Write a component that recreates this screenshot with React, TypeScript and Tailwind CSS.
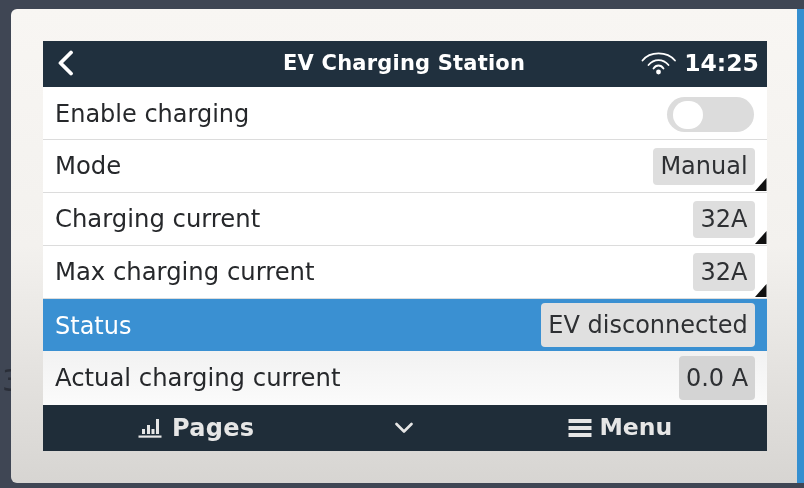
const font = { fontFamily: '"DejaVu Sans", sans-serif' };

function Corner() {
  return (
    <svg className="absolute right-0 bottom-[1px]" width="13" height="14" viewBox="0 0 13 14">
      <path d="M1 14 L12.5 14 L12.5 1 Z" fill="#111" />
    </svg>
  );
}

function Row({
  label,
  value,
  btn,
  corner,
}: {
  label: string;
  value: string;
  btn: string;
  corner?: boolean;
}) {
  return (
    <div className="relative flex h-[53px] shrink-0 items-center justify-between bg-white border-b border-[#dcdcdc] pl-3 pr-3">
      <span className="mt-[1px] text-[24.3px] text-[#26282b] leading-none">{label}</span>
      <span className={`flex items-center justify-center rounded-[4px] bg-[#dedede] text-[24px] text-[#2e3033] leading-none ${btn}`}>
        {value}
      </span>
      {corner && <Corner />}
    </div>
  );
}

export default function App() {
  return (
    <div className="relative flex h-[488px] w-[804px] overflow-hidden bg-[#3f4654] pt-[9px] pb-[5px] pl-[11px] blur-[0.4px]" style={font}>
      <span className="absolute left-[2px] top-[366px] text-[30px] leading-none text-[#2a2e38]">3</span>
      <div className="relative flex-1 rounded-l-[6px] bg-gradient-to-b from-[#f8f6f3] via-[#f3f1ee] to-[#d7d5d2] pt-[32px] pl-[32px] pr-[30px]">
        <div className="flex h-[410px] flex-col overflow-hidden">
          <div className="flex h-[46px] shrink-0 items-center justify-between bg-[#20303e] pl-[13px] pr-[8px] text-white">
            <svg className="-mt-[2px]" width="20" height="26" viewBox="0 0 20 26" fill="none" stroke="#fff" strokeWidth="3.8" strokeLinecap="round" strokeLinejoin="round">
              <path d="M15 2.5 L4.5 13 L15 23.5" />
            </svg>
            <span className="ml-[91px] text-[21px] font-bold tracking-[0.2px]">EV Charging Station</span>
            <div className="flex items-center gap-[7px]">
              <svg className="-mt-[3px]" width="36" height="25" viewBox="0 0 36 25" fill="none" stroke="#fff" strokeWidth="1.8" strokeLinecap="round">
                <path d="M1.5 10.5 C9 1 26 1 34 10.5" />
                <path d="M7.5 15 C13 8.5 22 8.5 27.5 15" />
                <path d="M12.5 18.5 C15 14.5 20 14.5 22.5 18.5" />
                <circle cx="17.5" cy="22" r="2.4" fill="#fff" stroke="none" />
              </svg>
              <span className="text-[23.5px] font-bold">14:25</span>
            </div>
          </div>
          <div className="flex h-[53px] shrink-0 items-center justify-between bg-white border-b border-[#dcdcdc] pl-3 pr-[13px]">
            <span className="mt-[1px] text-[24px] text-[#26282b] leading-none">Enable charging</span>
            <div className="mt-[3px] flex h-[35px] w-[87px] items-center rounded-full bg-[#dcdcdc] pl-[6px]">
              <div className="h-[28px] w-[30px] rounded-full bg-white" />
            </div>
          </div>
          <Row label="Mode" value="Manual" btn="h-[37px] w-[102px]" corner />
          <Row label="Charging current" value="32A" btn="h-[37px] w-[62px]" corner />
          <Row label="Max charging current" value="32A" btn="h-[38px] w-[62px]" corner />
          <div className="flex h-[52px] shrink-0 items-center justify-between bg-[#3a90d2] pl-3 pr-[12px]">
            <span className="mt-[1px] text-[24px] text-white leading-none">Status</span>
            <span className="flex h-[44px] w-[214px] items-center justify-center rounded-[4px] bg-[#e0e0e0] text-[24px] text-[#2e3033] leading-none">
              EV disconnected
            </span>
          </div>
          <div className="flex h-[54px] shrink-0 items-center justify-between bg-gradient-to-b from-[#f2f2f2] to-[#fbfbfb] pl-3 pr-[12px]">
            <span className="mt-[1px] text-[24.3px] text-[#26282b] leading-none">Actual charging current</span>
            <span className="flex h-[44px] w-[76px] items-center justify-center rounded-[4px] bg-[#d4d4d4] text-[24px] text-[#2e3033] leading-none">
              0.0 A
            </span>
          </div>
          <div className="flex flex-1 items-center bg-[#1f2d39] text-[#e6e6e6]">
            <div className="ml-[95px] flex items-center gap-[10px]">
              <svg width="24" height="20" viewBox="0 0 24 20" fill="#e6e6e6">
                <rect x="0.5" y="17.5" width="23" height="2.2" />
                <rect x="4" y="11" width="3" height="5" />
                <rect x="9" y="7" width="3" height="9" />
                <rect x="13.5" y="11" width="3" height="5" />
                <rect x="18" y="1" width="3" height="15" />
              </svg>
              <span className="text-[24px] font-bold tracking-[0.3px]">Pages</span>
            </div>
            <svg className="ml-[141px]" width="18" height="14" viewBox="0 0 18 14" fill="none" stroke="#e6e6e6" strokeWidth="2.6" strokeLinecap="round" strokeLinejoin="round">
              <path d="M1.5 3 L9 10.5 L16.5 3" />
            </svg>
            <div className="ml-[155px] flex items-center gap-[7px]">
              <svg width="24" height="20" viewBox="0 0 24 20" fill="#e6e6e6">
                <rect x="0.5" y="1" width="23" height="4" />
                <rect x="0.5" y="8" width="23" height="4" />
                <rect x="0.5" y="15" width="23" height="4" />
              </svg>
              <span className="text-[23.5px] font-bold">Menu</span>
            </div>
          </div>
        </div>
      </div>
      <div className="w-[7px] bg-[#358fd0]" />
    </div>
  );
}
